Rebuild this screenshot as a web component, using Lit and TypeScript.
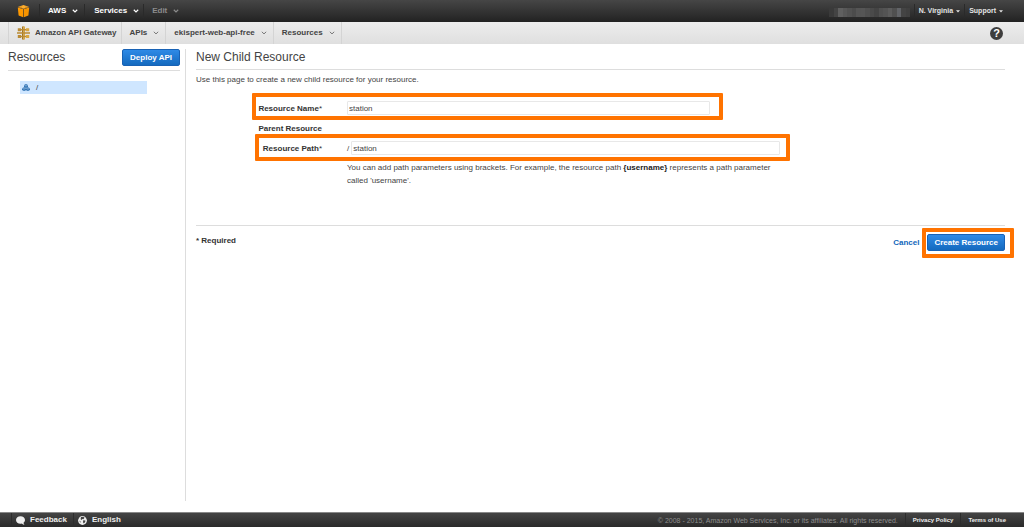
import { LitElement, html, css, svg } from "lit";
import { customElement, state } from "lit/decorators.js";

const chevron = html`<svg class="chevron" viewBox="0 0 6 4" aria-hidden="true">
  <path d="M.8 .8 3 2.9 5.2 .8" fill="none" stroke="currentColor" />
</svg>`;

const caret = html`<svg class="caret" viewBox="0 0 4 3" aria-hidden="true">
  <path d="M0 .3h4L2 2.6z" fill="currentColor" />
</svg>`;

const pixels = [
  "#3a3a3a", "#444444", "#606060", "#585858", "#525252", "#4c4c4c", "#555555", "#565656", "#505050",
  "#4a4a4a", "#444444", "#505050", "#545454", "#5c5c5c", "#505050", "#626468", "#444444", "#404040",
];

@customElement("top-bar")
export class TopBar extends LitElement {
  static styles = css`
    :host {
      display: flex;
      align-items: center;
      height: 22px;
      padding: 0 12px 0 16px;
      background: linear-gradient(#464646, #222);
      color: #fff;
      font-weight: bold;
    }
    button {
      display: flex;
      align-items: center;
      gap: 6px;
      height: 14px;
      padding: 0 8px;
      border: 0;
      border-left: 1px solid #2a2a2a;
      background: none;
      color: inherit;
      font: bold 8px/14px "Liberation Sans", Arial, sans-serif;
      white-space: nowrap;
    }
    .logo { display: block; width: 15px; height: 14px; margin-right: 8px; }
    .logo svg { display: block; width: 15px; height: 14px; }
    .aws { padding-right: 6px; }
    .services { padding: 0 4px 0 9px; }
    .dim { color: #8c8c8c; }
    .chevron { width: 6px; height: 4px; stroke-width: 1.2; }
    .spacer { flex: 1; }
    .user { display: block; width: 81px; height: 9px; margin: 2px 4px 0 0; }
    .small { gap: 3px; color: #e4e4e4; font-size: 7px; }
    .region { padding: 0 4px; }
    .support { padding: 0 9px 0 4px; }
    .caret { width: 4px; height: 3px; }
  `;

  render() {
    return html`
      <a class="logo" href="#" aria-label="Console home">
        <svg viewBox="0 0 15 14" aria-hidden="true">
          <path d="M1.8 3 7.5 1 13.2 3 7.5 4.7z" fill="#ffad2c" />
          <path d="M1.8 3.5 7.2 5.1V13.2L2.6 11.5z" fill="#ff9900" />
          <path d="M13.2 3.5 7.8 5.1V13.2L12.4 11.5z" fill="#f79400" />
          <path d="M5 2.6v2M10 2.6v2" stroke="#8a5608" stroke-width=".6" />
        </svg>
      </a>
      <button class="aws" type="button">AWS ${chevron}</button>
      <button class="services" type="button">Services ${chevron}</button>
      <button class="dim" type="button">Edit ${chevron}</button>
      <span class="spacer"></span>
      <svg class="user" viewBox="0 0 81 9" preserveAspectRatio="none" shape-rendering="crispEdges" aria-hidden="true">
        ${pixels.map((c, i) => svg`<rect x=${i * 4.5} y="0" width="4.5" height="9" fill=${c} />`)}
      </svg>
      <button class="small region" type="button">N. Virginia ${caret}</button>
      <button class="small support" type="button">Support ${caret}</button>
    `;
  }
}

@customElement("crumb-bar")
export class CrumbBar extends LitElement {
  static styles = css`
    :host {
      display: flex;
      align-items: stretch;
      height: 22px;
      padding: 0 21px 0 8px;
      background: linear-gradient(#ededed, #dfdfdf);
      color: #444;
    }
    a, .crumb {
      display: flex;
      align-items: center;
      padding: 0 6px 0 8px;
      border: 0;
      border-left: 1px solid #d4d4d4;
      background: none;
      color: inherit;
      font: bold 8px/22px "Liberation Sans", Arial, sans-serif;
      text-decoration: none;
      white-space: nowrap;
    }
    a { padding-right: 4px; }
    .crumb { gap: 6px; }
    .last { border-right: 1px solid #d4d4d4; }
    .gateway { width: 13px; height: 14px; margin-right: 5px; }
    .chevron { width: 6px; height: 4px; color: #777; }
    .help {
      align-self: center;
      width: 13px;
      height: 13px;
      margin-left: auto;
      padding: 0;
      border: 0;
      border-radius: 50%;
      background: #3d3d3d;
      color: #fff;
      font: bold 11px/13px "Liberation Sans", Arial, sans-serif;
      text-align: center;
    }
  `;

  render() {
    return html`
      <a href="#">
        <svg class="gateway" viewBox="0 0 13 14" aria-hidden="true">
          <path d="M5 .8 6.5 0v14L5 13.2z" fill="#a1741f" />
          <path d="M8 .8 6.5 0v14L8 13.2z" fill="#d9a741" />
          <path d="M.8 2.2H4v3H.8zM.8 9H4v3H.8z" fill="#b98a35" />
          <path d="M9 2.2h3.2v3H9zM9 9h3.2v3H9z" fill="#d9a741" />
          <path d="M0 6.200H13v1.600H0zM4 3h5v1.400H4zM4 9.800h5v1.400H4z" fill="#b98a35" />
        </svg>
        Amazon API Gateway
      </a>
      <button class="crumb" type="button">APIs ${chevron}</button>
      <button class="crumb" type="button">ekispert-web-api-free ${chevron}</button>
      <button class="crumb last" type="button">Resources ${chevron}</button>
      <button class="help" type="button" aria-label="Help">?</button>
    `;
  }
}

@customElement("resource-tree")
export class ResourceTree extends LitElement {
  static styles = css`
    :host { display: block; padding: 0 5px 0 8px; border-right: 1px solid #ddd; }
    header {
      display: flex;
      justify-content: space-between;
      align-items: flex-start;
      height: 21px;
      border-bottom: 1px solid #ddd;
    }
    h2 { margin: 0; color: #444; font-size: 12px; line-height: 16px; font-weight: normal; }
    button {
      height: 17px;
      padding: 0 7px;
      border: 1px solid #1862b5;
      border-radius: 2px;
      background: linear-gradient(#2e8ae6, #146abf);
      color: #fff;
      font: bold 8px/15px "Liberation Sans", Arial, sans-serif;
    }
    a {
      display: flex;
      align-items: center;
      gap: 6px;
      height: 13px;
      margin: 10px 33px 0 12px;
      padding-left: 2px;
      background: #cfe6ff;
      color: #444;
      text-decoration: none;
    }
    svg { width: 8px; height: 7px; }
  `;

  render() {
    return html`
      <header>
        <h2>Resources</h2>
        <button type="button">Deploy API</button>
      </header>
      <nav aria-label="Resources">
        <a href="#">
          <svg viewBox="0 0 8 7" aria-hidden="true">
            <path d="M4 0 6 1v2L4 4 2 3V1zM2 3.2 4 4.2v2L2 7 0 6V4.2zM6 3.2 8 4.2V6L6 7 4 6.2v-2z" fill="#3475b5" />
            <path d="M2.3 1.2 4 2l1.7-.8M.3 4.4 2 5.1l1.7-.7M4.3 4.4 6 5.1l1.7-.7" fill="none" stroke="#cfe6ff" stroke-width=".5" />
          </svg>
          /
        </a>
      </nav>
    `;
  }
}

@customElement("resource-form")
export class ResourceForm extends LitElement {
  @state() name = "station";
  @state() path = "station";

  static styles = css`
    :host { display: block; padding: 0 19px 0 10px; }
    h1 {
      height: 20px;
      margin: 0;
      border-bottom: 1px solid #ddd;
      color: #444;
      font-size: 12px;
      line-height: 16px;
      font-weight: normal;
    }
    p { margin: 0; }
    .intro { padding-top: 3px; line-height: 13px; }
    .fields { padding: 12px 0 38px; }
    .row {
      position: relative;
      display: grid;
      grid-template-columns: 126px minmax(0, 436px);
      column-gap: 25px;
      align-items: center;
      min-height: 20px;
    }
    .label { color: #333; font-weight: bold; text-align: right; }
    .label span { font-weight: normal; }
    .control { display: flex; align-items: center; gap: 2px; }
    input {
      box-sizing: border-box;
      flex: 1;
      min-width: 0;
      height: 14px;
      padding: 0 1px;
      border: 1px solid #e8e8e8;
      border-radius: 1px;
      background: #fff;
      color: #444;
      font: 8px/12px "Liberation Sans", Arial, sans-serif;
    }
    .name { max-width: 363px; }
    .path { max-width: 429px; }
    .hint { grid-column: 2; max-width: 424px; padding-top: 3px; line-height: 13px; }
    .hint b { color: #222; }
    .mark {
      position: absolute;
      border: 4px solid #ff7300;
      border-radius: 1px;
      pointer-events: none;
    }
    .mark-name { inset: -5px auto -2px 56px; width: 463px; }
    .mark-path { inset: -4px auto -3px 59px; width: 527px; }
    .mark-create { inset: -6px -9px -7px -5px; }
    footer {
      display: flex;
      justify-content: space-between;
      align-items: flex-start;
      padding-top: 8px;
      border-top: 1px solid #ddd;
    }
    .required { color: #333; font-weight: bold; line-height: 13px; }
    .actions { display: flex; align-items: center; gap: 8px; }
    .actions a { color: #1166bb; font-weight: bold; text-decoration: none; }
    .submit { position: relative; display: flex; }
    .submit button {
      height: 17px;
      padding: 0 6px;
      border: 1px solid #1862b5;
      border-radius: 2px;
      background: linear-gradient(#2e8ae6, #146abf);
      color: #fff;
      font: bold 8px/15px "Liberation Sans", Arial, sans-serif;
    }
  `;

  render() {
    return html`
      <h1>New Child Resource</h1>
      <p class="intro">Use this page to create a new child resource for your resource.</p>
      <form @submit=${(e: Event) => e.preventDefault()}>
        <div class="fields">
          <div class="row">
            <label class="label" for="name">Resource Name<span>*</span></label>
            <div class="control">
              <input id="name" class="name" .value=${this.name}
                @input=${(e: Event) => (this.name = (e.target as HTMLInputElement).value)} />
            </div>
            <span class="mark mark-name"></span>
          </div>
          <div class="row"><span class="label">Parent Resource</span></div>
          <div class="row">
            <label class="label" for="path">Resource Path<span>*</span></label>
            <div class="control">
              <span>/</span>
              <input id="path" class="path" .value=${this.path}
                @input=${(e: Event) => (this.path = (e.target as HTMLInputElement).value)} />
            </div>
            <span class="mark mark-path"></span>
          </div>
          <div class="row">
            <p class="hint">
              You can add path parameters using brackets. For example, the resource path
              <b>{username}</b> represents a path parameter called 'username'.
            </p>
          </div>
        </div>
        <footer>
          <span class="required">* Required</span>
          <div class="actions">
            <a href="#">Cancel</a>
            <span class="submit">
              <button type="submit">Create Resource</button>
              <span class="mark mark-create"></span>
            </span>
          </div>
        </footer>
      </form>
    `;
  }
}

@customElement("bottom-bar")
export class BottomBar extends LitElement {
  static styles = css`
    :host {
      display: flex;
      align-items: center;
      height: 14px;
      padding: 0 11px;
      border-top: 1px solid #888;
      background: linear-gradient(#444, #2a2a2a);
      color: #eee;
      font-weight: bold;
    }
    button, a {
      display: flex;
      align-items: center;
      gap: 5px;
      height: 14px;
      padding: 0 6px 0 4px;
      border: 0;
      border-left: 1px solid #2c2c2c;
      background: none;
      color: inherit;
      font: bold 8px/14px "Liberation Sans", Arial, sans-serif;
      text-decoration: none;
    }
    a { padding: 0 7px; font-size: 6px; white-space: nowrap; }
    svg { width: 9px; height: 9px; }
    .copy { margin-left: auto; padding-right: 7px; color: #8e8e8e; font-size: 7px; font-weight: normal; white-space: nowrap; }
  `;

  render() {
    return html`
      <button type="button">
        <svg viewBox="0 0 9 9" aria-hidden="true">
          <path d="M4.5.3C7 .3 9 1.9 9 4c0 1.200-.6 2.200-1.500 2.800q.1 1.200 1 2Q7 8.700 5.800 7.500 5.200 7.700 4.500 7.700C2 7.700 0 6.100 0 4S2 .3 4.500.3z" fill="#eee" />
        </svg>
        Feedback
      </button>
      <button type="button">
        <svg viewBox="0 0 9 9" aria-hidden="true">
          <circle cx="4.5" cy="4.5" r="4.4" fill="#eee" />
          <path d="M3 1 5.500 .8 6.500 1.800 5.400 3.200 4.200 3 3.600 4 2.600 3.200zM5.200 4.200 7.400 4.400 7.200 6 5.800 7.600 5 6.200zM1 4.400 2.600 5.400 2.800 7z" fill="#444" />
        </svg>
        English
      </button>
      <span class="copy">© 2008 - 2015, Amazon Web Services, Inc. or its affiliates. All rights reserved.</span>
      <a href="#">Privacy Policy</a>
      <a href="#">Terms of Use</a>
    `;
  }
}

@customElement("app-root")
export class AppRoot extends LitElement {
  static styles = css`
    :host {
      display: flex;
      flex-direction: column;
      min-height: 100vh;
      background: #fff;
      color: #444;
      font: 8px/13px "Liberation Sans", Arial, sans-serif;
    }
    main {
      flex: 1;
      display: grid;
      grid-template-columns: 186px minmax(0, 1fr);
      padding: 5px 0 11px;
    }
    resource-tree { box-sizing: border-box; }
  `;

  render() {
    return html`
      <top-bar></top-bar>
      <crumb-bar></crumb-bar>
      <main>
        <resource-tree></resource-tree>
        <resource-form></resource-form>
      </main>
      <bottom-bar></bottom-bar>
    `;
  }
}
